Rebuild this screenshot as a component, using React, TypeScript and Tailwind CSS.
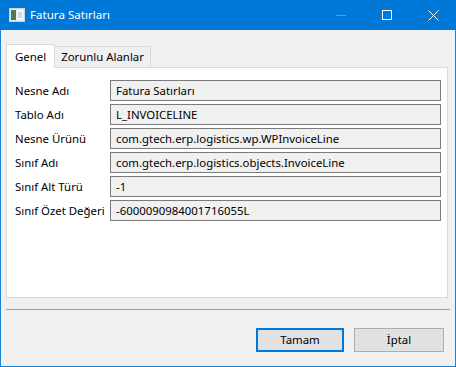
import React from 'react';

const alanlar = [
  { etiket: 'Nesne Adı', deger: 'Fatura Satırları' },
  { etiket: 'Tablo Adı', deger: 'L_INVOICELINE' },
  { etiket: 'Nesne Ürünü', deger: 'com.gtech.erp.logistics.wp.WPInvoiceLine' },
  { etiket: 'Sınıf Adı', deger: 'com.gtech.erp.logistics.objects.InvoiceLine' },
  { etiket: 'Sınıf Alt Türü', deger: '-1' },
  { etiket: 'Sınıf Özet Değeri', deger: '-6000090984001716055L' },
];

function PencereIkonu() {
  return (
    <svg width="16" height="14" viewBox="0 0 16 14">
      <rect x="0.5" y="0.5" width="15" height="13" fill="#e8eef2" stroke="#c9d3da" />
      <rect x="2" y="2" width="5" height="10" fill="#4d7a5e" />
      <rect x="8" y="2" width="6" height="10" fill="#f4f6f7" />
      <rect x="9" y="4" width="4" height="6" fill="#cfdbe2" />
    </svg>
  );
}

export default function App() {
  return (
    <div className="w-[456px] h-[367px] flex flex-col border border-t-0 border-[#1883d7] bg-[#f0f0f0] font-['Noto_Sans',sans-serif] text-[11.4px] text-black">
      {/* Başlık çubuğu */}
      <div className="h-[30px] -mx-px bg-[#0078d7] flex items-center text-white">
        <div className="pl-[9px] pr-[5px] flex items-center"><PencereIkonu /></div>
        <span className="text-[11.6px]">Fatura Satırları</span>
        <div className="ml-auto flex items-center h-full">
          <div className="w-[46px] h-full flex items-center justify-center">
            <div className="w-[10px] h-px bg-white/30" />
          </div>
          <div className="w-[46px] h-full flex items-center justify-center">
            <div className="w-[10px] h-[10px] border border-white" />
          </div>
          <div className="w-[46px] h-full flex items-center justify-center">
            <svg width="11" height="11" viewBox="0 0 11 11">
              <path d="M0.5 0.5 L10.5 10.5 M10.5 0.5 L0.5 10.5" stroke="white" strokeWidth="1" />
            </svg>
          </div>
        </div>
      </div>

      {/* İçerik */}
      <div className="flex-1 flex flex-col pl-[5px] pr-[6px] pt-[13px]">
        <div className="flex items-end h-[24px] relative z-10">
          <div className="h-[24px] -mb-px px-[8px] bg-white border border-b-0 border-[#d9d9d9] flex items-center">Genel</div>
          <div className="h-[21px] px-[6px] bg-[#f0f0f0] border border-l-0 border-b-0 border-[#d9d9d9] flex items-center">Zorunlu Alanlar</div>
        </div>
        <div className="w-[442px] h-[231px] bg-white border border-[#d9d9d9] pl-[8px] pt-[12px] flex flex-col gap-[3px]">
          {alanlar.map((a) => (
            <div key={a.etiket} className="flex items-center">
              <div className="w-[95px] whitespace-nowrap">{a.etiket}</div>
              <div className="w-[331px] h-[21px] border border-[#7a7a7a] bg-[#f0f0f0] px-[5px] flex items-center whitespace-nowrap overflow-hidden">
                {a.deger}
              </div>
            </div>
          ))}
        </div>
        <div className="mt-[11px] w-[444px] h-px bg-[#a0a0a0]" />
        <div className="mt-[18px] flex justify-end gap-[10px] pr-[5px]">
          <button className="w-[88px] h-[24px] border-2 border-[#0078d7] bg-[#e1e1e1]">Tamam</button>
          <button className="w-[90px] h-[24px] border border-[#adadad] bg-[#e1e1e1]">İptal</button>
        </div>
      </div>
    </div>
  );
}
